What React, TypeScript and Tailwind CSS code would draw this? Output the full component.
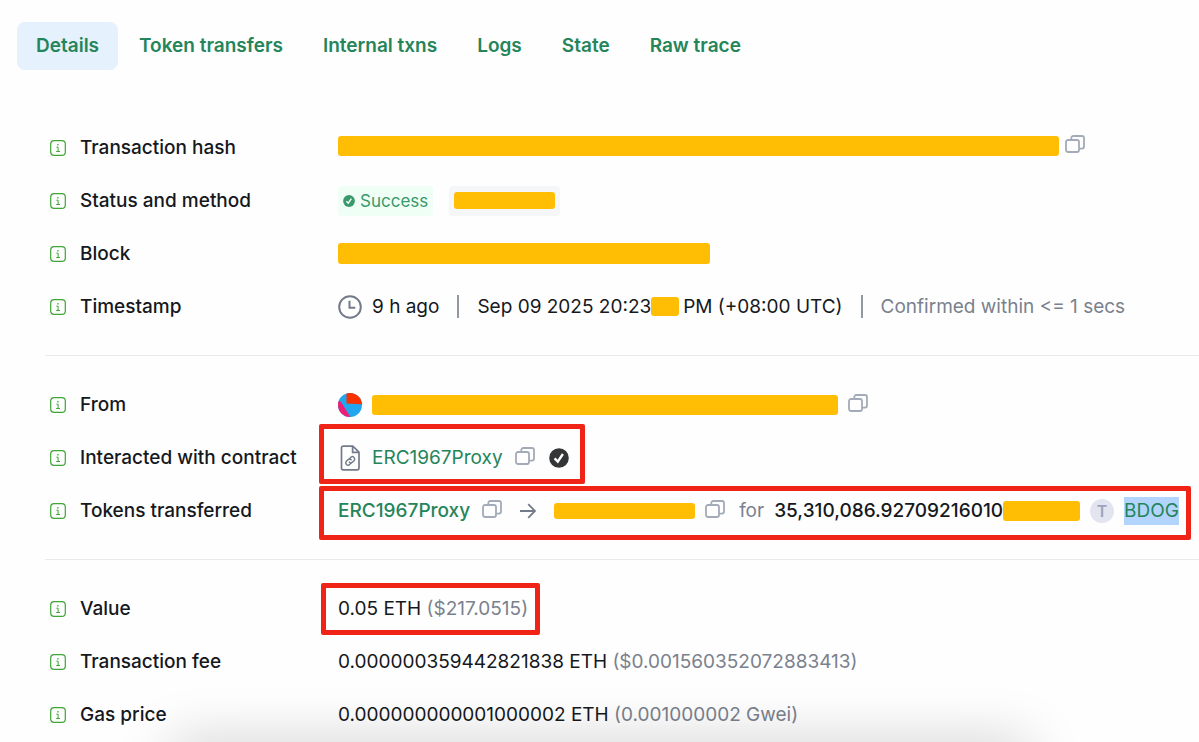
import type { ReactNode } from 'react';

const tabs = ['Details', 'Token transfers', 'Internal txns', 'Logs', 'State', 'Raw trace'];

const InfoIcon = () => (
  <svg viewBox="0 0 16 16" className="size-4 shrink-0" fill="none" stroke="#3fa535" aria-hidden="true">
    <rect x="0.7" y="0.7" width="14.6" height="14.6" rx="3.4" strokeWidth="1.2" />
    <path d="M6.4 7.2h1.7v4.2M6.2 11.5h3.8" strokeWidth="1" />
    <path d="M7.9 4.1v1.4" strokeWidth="1.3" />
  </svg>
);

const CopyButton = () => (
  <button type="button" aria-label="Copy" className="mb-1 shrink-0">
    <svg viewBox="0 0 20 18" className="h-[18px] w-5" fill="none" stroke="#a3abb8" strokeWidth="1.8">
      <rect x="1" y="5" width="13" height="12" rx="2" />
      <path d="M6.3 5V3a2 2 0 0 1 2-2H17a2 2 0 0 1 2 2v8.6a2 2 0 0 1-2 2h-3" />
    </svg>
  </button>
);

const Redacted = ({ className }: { className: string }) => (
  <span className={`block shrink-0 rounded-[3px] bg-[#ffbd03] ${className}`} />
);

const Highlight = ({ className }: { className: string }) => (
  <span className={`pointer-events-none absolute rounded-[2px] border-[5px] border-[#f02416] ${className}`} />
);

const Row = ({ label, children }: { label: string; children: ReactNode }) => (
  <div className="flex h-[53px] items-center">
    <dt className="flex w-[288px] shrink-0 items-center gap-[14px] font-medium">
      <InfoIcon />
      {label}
    </dt>
    <dd className="relative flex h-full items-center whitespace-nowrap">{children}</dd>
  </div>
);

const Section = ({ children }: { children: ReactNode }) => (
  <dl className="pl-[5px]">{children}</dl>
);

const Divider = () => <hr className="my-[22px] border-[#e9eaec]" />;

const Separator = () => <span className="mx-[18px] h-[23px] w-[2px] bg-[#9299a3]" />;

const ClockIcon = () => (
  <svg viewBox="0 0 24 24" className="size-6" fill="none" stroke="#737b8b" strokeWidth="2" aria-hidden="true">
    <circle cx="12" cy="12" r="10.8" />
    <path d="M11.5 5.8v7h5.8" />
  </svg>
);

const AvatarIcon = () => (
  <svg viewBox="0 0 24 24" className="size-6" aria-hidden="true">
    <clipPath id="avatar">
      <circle cx="12" cy="12" r="12" />
    </clipPath>
    <g clipPath="url(#avatar)">
      <rect width="24" height="24" fill="#22a6ee" />
      <path d="M0 7l3 2 10 16H0z" fill="#ee1f74" />
      <path d="M8.5-1H25v12.4l-16.5-.8z" fill="#fa3200" />
    </g>
  </svg>
);

const ContractIcon = () => (
  <svg viewBox="0 0 24 26" className="h-[26px] w-6" fill="none" stroke="#737b8b" strokeWidth="1.7" strokeLinejoin="round" aria-hidden="true">
    <path d="M5.2 1.2h9.6l6.2 6v15.9a1.7 1.7 0 0 1-1.7 1.7H5.2a1.7 1.7 0 0 1-1.7-1.7V2.9a1.7 1.7 0 0 1 1.7-1.7z" />
    <path d="M14.6 1.4v6h6" />
    <g strokeWidth="1.4" strokeLinecap="round">
      <path d="M11.4 13.7l1.5-1.5a2.35 2.35 0 0 1 3.3 3.3l-1.6 1.6a2.35 2.35 0 0 1-3.3 0" />
      <path d="M13.1 18.1l-1.5 1.5a2.35 2.35 0 0 1-3.3-3.3l1.6-1.6a2.35 2.35 0 0 1 3.3 0" />
    </g>
  </svg>
);

const CheckBadge = ({ className }: { className: string }) => (
  <svg viewBox="0 0 20 20" className={className} aria-hidden="true">
    <circle cx="10" cy="10" r="9.8" fill="currentColor" />
    <path d="M5.6 10.3l3.2 3.3L13.9 6" fill="none" stroke="#fff" strokeWidth="2.4" />
  </svg>
);

const ArrowIcon = () => (
  <svg viewBox="0 0 16 16" className="size-4" fill="none" stroke="#737b8b" strokeWidth="1.8" aria-hidden="true">
    <path d="M0 8h14.5M8.2 1.2L15 8l-6.8 6.8" />
  </svg>
);

const App = () => (
  <main className="relative min-h-screen overflow-hidden bg-[#fefefe] pt-[22px] font-['Inter',sans-serif] text-[19px] leading-7 text-[#15181c]">
    <nav className="flex gap-[2px] pl-[17px]">
      {tabs.map((tab) => (
        <button
          key={tab}
          type="button"
          className={`h-12 rounded-lg px-[19px] font-semibold whitespace-nowrap text-[#25855a] ${tab === 'Details' ? 'bg-[#e6f1fe]' : ''}`}
        >
          {tab}
        </button>
      ))}
    </nav>

    <div className="mt-[51px] pl-[45px]">
      <Section>
        <Row label="Transaction hash">
          <div className="flex items-center gap-1.5 pb-1">
            <Redacted className="h-5 w-[721px]" />
            <CopyButton />
          </div>
        </Row>
        <Row label="Status and method">
          <span className="flex h-[30px] items-center gap-[5px] rounded bg-[#f0fff5] px-[5px] text-[17px] text-[#38996b]">
            <CheckBadge className="size-3" />
            Success
          </span>
          <span className="ml-4 flex h-[30px] items-center rounded bg-[#f5f6f8] px-[5px]">
            <Redacted className="h-[17px] w-[101px]" />
          </span>
        </Row>
        <Row label="Block">
          <Redacted className="h-[21px] w-[372px]" />
        </Row>
        <Row label="Timestamp">
          <ClockIcon />
          <span className="ml-2.5">9 h ago</span>
          <Separator />
          <span>Sep 09 2025 20:23</span>
          <Redacted className="h-[19px] w-7" />
          <span className="ml-1">PM (+08:00 UTC)</span>
          <Separator />
          <span className="text-[#7a818d]">Confirmed within &lt;= 1 secs</span>
        </Row>
      </Section>
      <Divider />
      <Section>
        <Row label="From">
          <AvatarIcon />
          <Redacted className="mr-2.5 ml-2.5 h-5 w-[466px]" />
          <CopyButton />
        </Row>
        <Row label="Interacted with contract">
          <ContractIcon />
          <a href="#contract" className="mr-3 ml-2.5 text-[#25855a]">ERC1967Proxy</a>
          <CopyButton />
          <CheckBadge className="ml-3.5 size-5 text-[#343536]" />
          <Highlight className="-top-[7px] -right-4 bottom-0 -left-[19px]" />
        </Row>
        <Row label="Tokens transferred">
          <a href="#from" className="mr-3 font-medium text-[#25855a]">ERC1967Proxy</a>
          <CopyButton />
          <span className="mr-[18px] ml-[18px]">
            <ArrowIcon />
          </span>
          <Redacted className="mr-2.5 h-4 w-[141px]" />
          <CopyButton />
          <span className="mr-2.5 ml-3.5 text-[#7a818d]">for</span>
          <span className="font-medium">35,310,086.92709216010</span>
          <Redacted className="h-5 w-[77px]" />
          <span className="mx-2.5 flex size-6 items-center justify-center rounded-full bg-[#e2e4f0] text-base font-semibold text-[#a0a3bd]">T</span>
          <a href="#token" className="bg-[#b3d5fd] text-[#25855a]">BDOG</a>
          <Highlight className="top-[2px] -right-3 -bottom-[3px] -left-[19px]" />
        </Row>
      </Section>
      <Divider />
      <Section>
        <Row label="Value">
          <span>0.05 ETH <span className="text-[#7a818d]">($217.0515)</span></span>
          <Highlight className="top-[1px] -right-3 bottom-0 -left-[17px]" />
        </Row>
        <Row label="Transaction fee">
          <span>0.000000359442821838 ETH <span className="text-[#7a818d]">($0.001560352072883413)</span></span>
        </Row>
        <Row label="Gas price">
          <span>0.000000000001000002 ETH <span className="text-[#7a818d]">(0.001000002 Gwei)</span></span>
        </Row>
      </Section>
    </div>

    <div className="pointer-events-none absolute inset-x-[170px] -bottom-10 h-10 shadow-[0_0_56px_rgba(0,0,0,0.2)]" />
  </main>
);

export default App;
